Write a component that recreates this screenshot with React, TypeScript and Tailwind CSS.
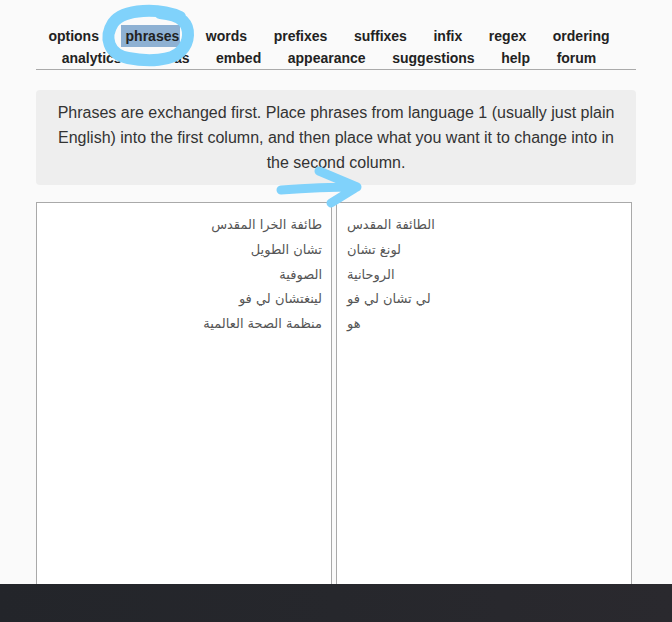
import React from "react";

const row1 = ["options", "phrases", "words", "prefixes", "suffixes", "infix", "regex", "ordering"];
const row2 = ["analytics", "extras", "embed", "appearance", "suggestions", "help", "forum"];

const leftText = [
  "طائفة الخرا المقدس",
  "تشان الطويل",
  "الصوفية",
  "لينغتشان لي فو",
  "منظمة الصحة العالمية",
].join("\n");

const rightText = [
  "الطائفة المقدس",
  "لونغ تشان",
  "الروحانية",
  "لي تشان لي فو",
  "هو",
].join("\n");

function NavItem({ label }: { label: string }) {
  if (label === "phrases") {
    return (
      <span className="bg-[#8eb1d3] pl-[5px] -ml-[5px] pr-[1px] -mr-[1px]">{label}</span>
    );
  }
  return <span>{label}</span>;
}

export default function App() {
  return (
    <div
      className="relative h-[622px] w-[672px] overflow-hidden bg-[#fafafa] flex flex-col"
      style={{ fontFamily: '"Liberation Sans", Arial, sans-serif' }}
    >
      <div className="flex-1 overflow-hidden px-[36px] pt-[25px]">
        <nav className="border-b border-[#aaaaaa] pr-[14px] text-[14px] font-bold leading-[22px] text-[#222222]">
          <div className="flex justify-center gap-x-[26.6px]">
            {row1.map((l) => (
              <NavItem key={l} label={l} />
            ))}
          </div>
          <div className="flex justify-center gap-x-[26.6px]">
            {row2.map((l) => (
              <NavItem key={l} label={l} />
            ))}
          </div>
        </nav>
        <div className="mt-[20px] rounded-[4px] bg-[#eeeeee] py-[10px] text-center text-[16px] leading-[25px] text-[#333333]">
          Phrases are exchanged first. Place phrases from language 1 (usually just plain
          <br />
          English) into the first column, and then place what you want it to change into in
          <br />
          the second column.
        </div>
        <div className="mt-[17px] flex gap-[4px]">
          <textarea
            dir="rtl"
            readOnly
            defaultValue={leftText}
            className="h-[420px] w-[296px] resize-none border border-[#a9a9a9] bg-white px-[9px] pt-[10px] text-[13px] leading-[24.75px] text-[#555555] outline-none"
            style={{ fontFamily: '"DejaVu Sans", "Noto Sans", sans-serif' }}
          />
          <textarea
            readOnly
            defaultValue={rightText}
            className="h-[420px] w-[296px] resize-none border border-[#a9a9a9] bg-white px-[10px] pt-[10px] text-[13px] leading-[24.75px] text-[#555555] outline-none"
            style={{ fontFamily: '"DejaVu Sans", "Noto Sans", sans-serif' }}
          />
        </div>
      </div>
      <div className="h-[38px] shrink-0 bg-gradient-to-r from-[#23252a] via-[#26272c] to-[#2a292e]" />

      <svg
        className="pointer-events-none absolute left-0 top-0"
        width="672"
        height="622"
        viewBox="0 0 672 622"
      >
        <path
          d="M 180 17 C 160 8, 124 8, 113 23 C 104 37, 108 54, 128 58 C 148 62, 172 61, 181 51 C 190 42, 190 28, 183 21 C 178 16, 170 14, 160 13"
          fill="none"
          stroke="#80d2fb"
          strokeWidth="12"
          strokeLinecap="round"
          strokeLinejoin="round"
        />
        <path
          d="M 281 190 Q 320 187 357 187 M 319 171 L 357 187 L 331 203"
          fill="none"
          stroke="#80d2fb"
          strokeWidth="9"
          strokeLinecap="round"
          strokeLinejoin="round"
        />
      </svg>
    </div>
  );
}
